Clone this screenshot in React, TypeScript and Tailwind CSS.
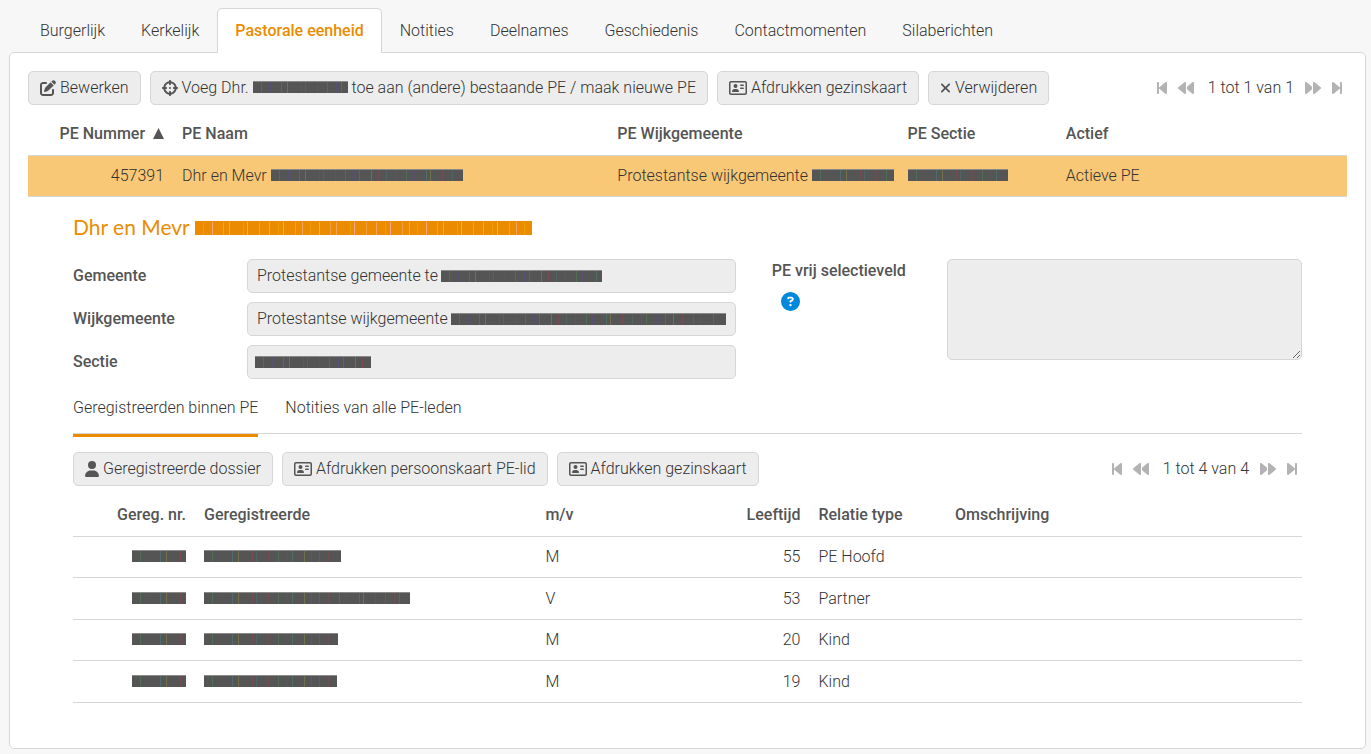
import type { ReactNode } from "react";
import {
  FaBackward,
  FaBackwardStep,
  FaCircleQuestion,
  FaCrosshairs,
  FaForward,
  FaForwardStep,
  FaPenToSquare,
  FaRegAddressCard,
  FaUser,
  FaXmark,
} from "react-icons/fa6";

const tabs = [
  "Burgerlijk",
  "Kerkelijk",
  "Pastorale eenheid",
  "Notities",
  "Deelnames",
  "Geschiedenis",
  "Contactmomenten",
  "Silaberichten",
];

const members = [
  { nameWidth: 137, gender: "M", age: 55, relation: "PE Hoofd" },
  { nameWidth: 206, gender: "V", age: 53, relation: "Partner" },
  { nameWidth: 134, gender: "M", age: 20, relation: "Kind" },
  { nameWidth: 133, gender: "M", age: 19, relation: "Kind" },
];

const steps = [8, 9, 11, 6, 14, 4, 12, 10, 9, 5, 12, 7];
const darkTints = ["#6e4f52", "#4f6e55", "#5a4f74", "#4f6c68", "#70704a", "#784c50", "#4f6464"];
const orangeTints = ["#f3a261", "#e9a000", "#f5a58a", "#f0a040"];

// Masked personal data: a solid bar with a few faint vertical lines
function Masked({ width, tone = "dark" }: { width: number; tone?: "dark" | "orange" }) {
  const tints = tone === "dark" ? darkTints : orangeTints;
  const height = tone === "dark" ? 12 : 14;
  const lines: { x: number; fill: string }[] = [];
  let x = steps[0];
  for (let i = 1; x < width - 2; i++) {
    lines.push({ x, fill: tints[i % tints.length] });
    x += steps[i % steps.length];
  }

  return (
    <svg width={width} height={height} className="inline-block shrink-0 align-baseline" aria-hidden="true">
      <rect width={width} height={height} fill={tone === "dark" ? "#555555" : "#eb8c00"} />
      {lines.map((line) => (
        <rect key={line.x} x={line.x} y={1} width={1} height={height - 1} fill={line.fill} />
      ))}
      {tone === "dark" && <rect width={width} height={1} fill="#8a8a8a" />}
    </svg>
  );
}

function ActionButton({ icon, children }: { icon: ReactNode; children: ReactNode }) {
  return (
    <button
      type="button"
      className="flex h-[34px] items-center gap-1 whitespace-nowrap rounded-[5px] border border-[#d6d6d6] bg-[#ededed] px-[11px] text-[#555]"
    >
      {icon}
      <span className="text-[#333]">{children}</span>
    </button>
  );
}

function Pager({ label }: { label: string }) {
  return (
    <div className="ml-auto flex items-center gap-[11px] pr-[5px] text-[#b3b3b3]">
      <button type="button" aria-label="Eerste">
        <FaBackwardStep className="h-4 w-[10px]" />
      </button>
      <button type="button" aria-label="Vorige">
        <FaBackward className="h-4 w-4" />
      </button>
      <span className="pl-[3px] text-[#333]">{label}</span>
      <button type="button" aria-label="Volgende">
        <FaForward className="h-4 w-4" />
      </button>
      <button type="button" aria-label="Laatste">
        <FaForwardStep className="h-4 w-[10px]" />
      </button>
    </div>
  );
}

function Field({ id, label, value, masked }: { id: string; label: string; value: string; masked: number }) {
  return (
    <div className="flex items-center">
      <label htmlFor={id} className="w-[174px] shrink-0 font-medium text-[#555]">
        {label}
      </label>
      <div className="flex h-[34px] min-w-0 grow items-center overflow-hidden rounded-[5px] border border-[#d6d6d6] bg-[#ededed] px-[7px]">
        <input
          id={id}
          readOnly
          value={value}
          className={value ? "mr-[3px] ml-[2px] field-sizing-content bg-transparent outline-none" : "w-0 outline-none"}
        />
        <Masked width={masked} />
      </div>
    </div>
  );
}

export default function App() {
  return (
    <div className="flex min-h-screen flex-col bg-[#f7f7f7] pt-2 pr-[5px] pb-[5px] pl-[9px] font-[Roboto,sans-serif] text-base leading-6 font-light text-[#333]">
      <nav className="relative z-10 -mb-px flex pl-[13px]">
        {tabs.map((tab) => (
          <a
            key={tab}
            href="#"
            className={
              tab === "Pastorale eenheid"
                ? "flex h-[45px] items-center rounded-t-[5px] border border-b-0 border-[#d6d6d6] bg-white px-[17px] font-medium text-[#eb8c00]"
                : "flex h-[45px] items-center border border-transparent px-[17px]"
            }
          >
            {tab}
          </a>
        ))}
      </nav>

      <main className="grow rounded-[5px] border border-[#d6d6d6] bg-white p-[18px]">
        <div className="flex items-center gap-[9px]">
          <ActionButton icon={<FaPenToSquare className="h-4 w-4" />}>Bewerken</ActionButton>
          <ActionButton icon={<FaCrosshairs className="h-4 w-4" />}>
            Voeg Dhr. <Masked width={95} /> toe aan (andere) bestaande PE / maak nieuwe PE
          </ActionButton>
          <ActionButton icon={<FaRegAddressCard className="h-4 w-[18px]" />}>Afdrukken gezinskaart</ActionButton>
          <ActionButton icon={<FaXmark className="h-4 w-[11px]" />}>Verwijderen</ActionButton>
          <Pager label="1 tot 1 van 1" />
        </div>

        <table className="mt-2 w-full table-fixed text-left">
          <thead>
            <tr className="h-[42px] border-b border-[#d6d6d6] text-[#555]">
              <th className="w-[11%] px-[9px] text-right font-medium whitespace-nowrap">
                PE Nummer
                <svg viewBox="0 0 11 11" className="ml-2 inline-block h-[11px] w-[11px] align-baseline" aria-hidden="true">
                  <path d="M5.5 0 11 11H0z" fill="currentColor" />
                </svg>
              </th>
              <th className="w-[33%] px-[9px] font-medium">PE Naam</th>
              <th className="w-[22%] px-[9px] font-medium">PE Wijkgemeente</th>
              <th className="w-[12%] px-[9px] font-medium">PE Sectie</th>
              <th className="px-[9px] font-medium">Actief</th>
            </tr>
          </thead>
          <tbody>
            <tr className="h-[41px] border-b border-[#d6d6d6] bg-[#f9c876]">
              <td className="px-[9px] text-right">457391</td>
              <td className="px-[9px]">
                Dhr en Mevr <Masked width={192} />
              </td>
              <td className="px-[9px] whitespace-nowrap">
                Protestantse wijkgemeente <Masked width={82} />
              </td>
              <td className="px-[9px]">
                <Masked width={100} />
              </td>
              <td className="px-[9px]">Actieve PE</td>
            </tr>
          </tbody>
        </table>

        <section className="px-[45px] pt-4">
          <h2 className="font-[Lato,sans-serif] text-[21px] leading-7 font-normal text-[#eb8c00]">
            Dhr en Mevr <Masked width={337} tone="orange" />
          </h2>

          <div className="mt-[18px] grid grid-cols-[5fr_4fr] gap-9">
            <div className="flex min-w-0 flex-col gap-[9px]">
              <Field id="gemeente" label="Gemeente" value="Protestantse gemeente te" masked={161} />
              <Field id="wijkgemeente" label="Wijkgemeente" value="Protestantse wijkgemeente" masked={275} />
              <Field id="sectie" label="Sectie" value="" masked={116} />
            </div>
            <div className="flex min-w-0 items-start">
              <div className="w-[175px] shrink-0">
                <label htmlFor="selectieveld" className="block font-medium text-[#555]">
                  PE vrij selectieveld
                </label>
                <button type="button" aria-label="Help" className="mt-[9px] ml-[9px] block text-[#0088dd]">
                  <FaCircleQuestion className="h-[19px] w-[19px]" />
                </button>
              </div>
              <textarea
                id="selectieveld"
                readOnly
                className="h-[101px] min-w-0 grow resize rounded-[5px] border border-[#d6d6d6] bg-[#ededed] outline-none"
              />
            </div>
          </div>

          <nav className="mt-[17px] flex gap-[27px] border-b border-[#d6d6d6]">
            <a href="#" className="-mb-1 border-b-3 border-[#eb8c00] pb-[14px]">
              Geregistreerden binnen PE
            </a>
            <a href="#">Notities van alle PE-leden</a>
          </nav>

          <div className="mt-[18px] flex items-center gap-[9px]">
            <ActionButton icon={<FaUser className="h-4 w-[14px]" />}>Geregistreerde dossier</ActionButton>
            <ActionButton icon={<FaRegAddressCard className="h-4 w-[18px]" />}>Afdrukken persoonskaart PE-lid</ActionButton>
            <ActionButton icon={<FaRegAddressCard className="h-4 w-[18px]" />}>Afdrukken gezinskaart</ActionButton>
            <Pager label="1 tot 4 van 4" />
          </div>

          <table className="mt-2 w-full table-fixed text-left">
            <thead>
              <tr className="h-[43px] border-b border-[#d6d6d6] text-[#555]">
                <th className="w-[122px] px-[9px] text-right font-medium">Gereg. nr.</th>
                <th className="w-5/18 px-[9px] font-medium">Geregistreerde</th>
                <th className="w-1/9 px-[9px] font-medium">m/v</th>
                <th className="w-1/9 px-[9px] text-right font-medium">Leeftijd</th>
                <th className="w-1/9 px-[9px] font-medium">Relatie type</th>
                <th className="px-[9px] font-medium">Omschrijving</th>
              </tr>
            </thead>
            <tbody>
              {members.map((member) => (
                <tr key={member.age} className="h-[41px] border-b border-[#d6d6d6] even:h-[42px]">
                  <td className="px-[9px] text-right">
                    <Masked width={54} />
                  </td>
                  <td className="px-[9px]">
                    <Masked width={member.nameWidth} />
                  </td>
                  <td className="px-[9px]">{member.gender}</td>
                  <td className="px-[9px] text-right">{member.age}</td>
                  <td className="px-[9px]">{member.relation}</td>
                  <td className="px-[9px]" />
                </tr>
              ))}
            </tbody>
          </table>
        </section>
      </main>
    </div>
  );
}
